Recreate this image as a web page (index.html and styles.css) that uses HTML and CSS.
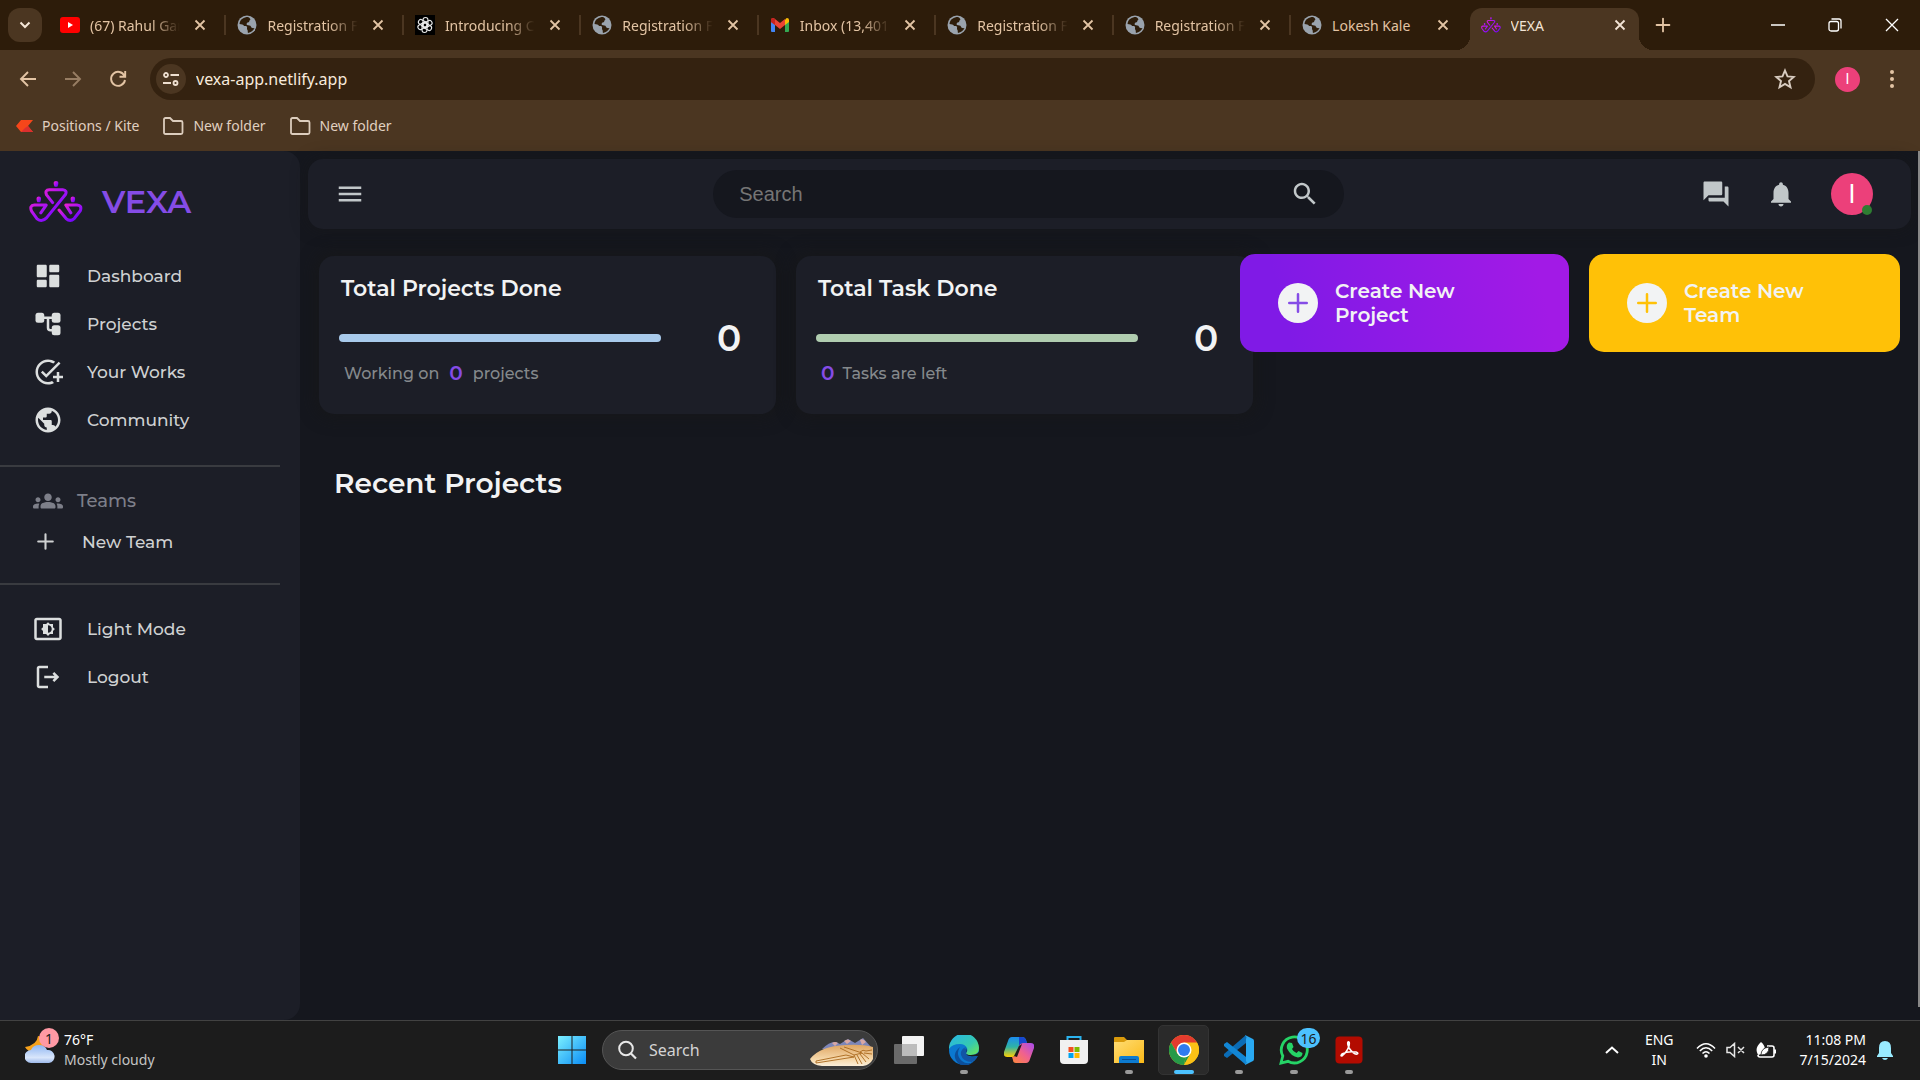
FILE: index.html
```html
<!DOCTYPE html>
<html lang="en">
<head>
<meta charset="utf-8">
<meta name="viewport" content="width=device-width, initial-scale=1">
<title>VEXA</title>
<link rel="stylesheet" href="styles.css">
</head>
<body>
<svg class="defs" aria-hidden="true">
  <defs>
    <linearGradient id="vexa" x1="0" y1="0" x2="1" y2="1"><stop offset="0" stop-color="#ff22c4"/><stop offset=".5" stop-color="#a512f5"/><stop offset="1" stop-color="#5a00ff"/></linearGradient>
    <linearGradient id="win" x1="0" y1="0" x2="1" y2="1"><stop offset="0" stop-color="#7cf0ff"/><stop offset="1" stop-color="#0a8cf5"/></linearGradient>
    <linearGradient id="cloud" x1="0" y1="0" x2="0" y2="1"><stop offset="0" stop-color="#8fb6f2"/><stop offset=".7" stop-color="#d9e6fb"/><stop offset="1" stop-color="#9db9ea"/></linearGradient>
    <linearGradient id="edgeTop" x1="0" y1="0" x2="1" y2="1"><stop offset="0" stop-color="#27b4ea"/><stop offset=".6" stop-color="#35c9b0"/><stop offset="1" stop-color="#72ea50"/></linearGradient>
    <linearGradient id="copilotA" x1="0" y1="0" x2="0" y2="1"><stop offset="0" stop-color="#1c8df0"/><stop offset=".5" stop-color="#2fb3a5"/><stop offset="1" stop-color="#ffd000"/></linearGradient>
    <linearGradient id="copilotB" x1="1" y1="0" x2="0" y2="1"><stop offset="0" stop-color="#a64bf0"/><stop offset=".5" stop-color="#f0618f"/><stop offset="1" stop-color="#ff8a3a"/></linearGradient>
    <linearGradient id="folder" x1="0" y1="0" x2="1" y2="1"><stop offset="0" stop-color="#ffdd75"/><stop offset="1" stop-color="#fbb917"/></linearGradient>
    <linearGradient id="sand" x1="0" y1="0" x2="0" y2="1"><stop offset="0" stop-color="#dfa562"/><stop offset=".7" stop-color="#f6d9ac"/><stop offset="1" stop-color="#fbeed9"/></linearGradient>
  </defs>
  <symbol id="i-logo" viewBox="88 92 160 124"><g fill="none" stroke="url(#vexa)" stroke-width="9" stroke-linecap="round" stroke-linejoin="round"><path d="M158 156 140 133Q134 118 148 118H188Q202 119 196 132L140 201Q126 215 112 204L96 182Q88 164 104 163H139L123 186"/><path d="M177 178 198 203Q210 214 222 203L240 180Q246 164 230 163H197L212 186"/></g><g fill="url(#vexa)"><path d="M168 92c9 0 8 9 4 17h-8c-4-8-5-17 4-17z"/><path d="M117 138c8 0 8 9 4 17h-8c-4-8-4-17 4-17z"/><path d="M218 138c8 0 8 9 4 17h-8c-4-8-4-17 4-17z"/></g></symbol>
  <symbol id="i-globe" viewBox="0 0 24 24"><path d="M12 2C6.480 2 2 6.480 2 12s4.480 10 10 10 10-4.480 10-10S17.520 2 12 2zm-1 17.930c-3.950-.49-7-3.850-7-7.930 0-.62.08-1.210.21-1.790L9 15v1c0 1.100.9 2 2 2v1.930zm6.900-2.540c-.26-.81-1-1.390-1.900-1.390h-1v-3c0-.55-.45-1-1-1H8v-2h2c.55 0 1-.45 1-1V7h2c1.100 0 2-.9 2-2v-.41c2.930 1.190 5 4.060 5 7.410 0 2.080-.8 3.970-2.100 5.390z"/></symbol>
  <symbol id="i-site" viewBox="0 0 20 20"><circle cx="10" cy="10" r="9.500" fill="#9aa3ad"/><path d="M11 2C7 2 3 4 2.500 9c2 .2 4 .4 4.500 2 1.500 0 2.500-.3 3 .8.300 1.300-.5 2 .5 3.200.5 1 0 2 .5 3 3-.5 5.500-2.500 6.500-5-1.500.300-3 .2-3.500-1.300-.5-1.500-2.500-1.200-4-1.700-1-1 0-2.500 1.500-2.700 1-.3.500-1.600 1.500-2.300C14 4.500 13 3 11 2z" fill="#2e1d0a"/></symbol>
  <symbol id="i-close" viewBox="0 0 12 12"><path d="M1.500 1.500l9 9m0-9l-9 9" fill="none" stroke="currentColor" stroke-width="1.800"/></symbol>
  <symbol id="i-plus" viewBox="0 0 24 24"><path d="M12 5v14M5 12h14" fill="none" stroke="currentColor" stroke-width="2" stroke-linecap="round"/></symbol>
  <symbol id="i-search" viewBox="0 0 24 24"><path d="M15.500 14h-.79l-.28-.27C15.410 12.590 16 11.110 16 9.500 16 5.910 13.090 3 9.500 3S3 5.910 3 9.500 5.910 16 9.500 16c1.610 0 3.090-.59 4.230-1.570l.27.28v.79l5 4.990L20.490 19l-4.990-5zm-6 0C7.010 14 5 11.990 5 9.500S7.010 5 9.500 5 14 7.010 14 9.500 11.990 14 9.500 14z"/></symbol>
  <symbol id="i-folder" viewBox="0 0 22 20"><path d="M2 3.500Q2 2 3.500 2H8l3 3h8q1.500 0 1.500 1.500V16.500Q20.500 18 19 18H3.500Q2 18 2 16.500z" fill="none" stroke="#dccdbd" stroke-width="1.800"/></symbol>
  <symbol id="i-bell" viewBox="0 0 24 24"><path d="M12 22c1.100 0 2-.9 2-2h-4c0 1.100.89 2 2 2zm6-6v-5c0-3.070-1.640-5.640-4.500-6.320V4c0-.83-.67-1.500-1.500-1.500s-1.500.67-1.500 1.500v.68C7.630 5.360 6 7.920 6 11v5l-2 2v1h16v-1l-2-2z"/></symbol>
</svg>

<header class="browser">
  <div class="tabstrip">
    <button class="tab-search" aria-label="Search tabs"><svg width="12" height="12" viewBox="0 0 12 12"><path d="M1.500 3.500 6 8l4.500-4.500" fill="none" stroke="currentColor" stroke-width="2"/></svg></button>
    <div class="tabs">
      <div class="tab"><svg class="favicon" viewBox="0 0 20 20"><rect y="2" width="20" height="16" rx="3" fill="#f00"/><path d="M8 7v6l5-3z" fill="#fff"/></svg><span class="tab-title">(67) Rahul Gandhi</span><button class="tab-close" aria-label="Close tab"><svg><use href="#i-close"/></svg></button></div>
      <div class="tab"><svg class="favicon"><use href="#i-site"/></svg><span class="tab-title">Registration Form</span><button class="tab-close" aria-label="Close tab"><svg><use href="#i-close"/></svg></button></div>
      <div class="tab"><svg class="favicon" viewBox="0 0 20 20"><path d="M0 0h20v20H0z" fill="#000"/><g fill="none" stroke="#e8e8e8" stroke-width="1.100"><rect id="petal" x="8" y="2.500" width="5" height="10" rx="2.500"/><use href="#petal" transform="rotate(60 10 10)"/><use href="#petal" transform="rotate(120 10 10)"/><use href="#petal" transform="rotate(180 10 10)"/><use href="#petal" transform="rotate(240 10 10)"/><use href="#petal" transform="rotate(300 10 10)"/></g></svg><span class="tab-title">Introducing ChatGPT</span><button class="tab-close" aria-label="Close tab"><svg><use href="#i-close"/></svg></button></div>
      <div class="tab"><svg class="favicon"><use href="#i-site"/></svg><span class="tab-title">Registration Form</span><button class="tab-close" aria-label="Close tab"><svg><use href="#i-close"/></svg></button></div>
      <div class="tab"><svg class="favicon" viewBox="0 0 20 20"><path d="M1 5v11q0 1 1 1h3V8z" fill="#4285f4"/><path d="M19 5v11q0 1-1 1h-3V8z" fill="#34a853"/><path d="M15 5v5l4-3V5q0-2-2-2-1 0-2 2z" fill="#fbbc04"/><path d="M1 5q0-2 2-2 1 0 2 1l5 4 5-4v6l-5 4-5-4-4-3z" fill="#ea4335"/><path d="M1 5q0-2 2-2l2 1v6L1 7z" fill="#c5221f"/></svg><span class="tab-title">Inbox (13,401) - mail</span><button class="tab-close" aria-label="Close tab"><svg><use href="#i-close"/></svg></button></div>
      <div class="tab"><svg class="favicon"><use href="#i-site"/></svg><span class="tab-title">Registration Form</span><button class="tab-close" aria-label="Close tab"><svg><use href="#i-close"/></svg></button></div>
      <div class="tab"><svg class="favicon"><use href="#i-site"/></svg><span class="tab-title">Registration Form</span><button class="tab-close" aria-label="Close tab"><svg><use href="#i-close"/></svg></button></div>
      <div class="tab before-active"><svg class="favicon"><use href="#i-site"/></svg><span class="tab-title">Lokesh Kale</span><button class="tab-close" aria-label="Close tab"><svg><use href="#i-close"/></svg></button></div>
      <div class="tab active"><svg class="favicon"><use href="#i-logo"/></svg><span class="tab-title">VEXA</span><button class="tab-close" aria-label="Close tab"><svg><use href="#i-close"/></svg></button></div>
    </div>
    <button class="new-tab" aria-label="New tab"><svg width="22" height="22"><use href="#i-plus"/></svg></button>
    <div class="window-controls">
      <button aria-label="Minimize"><svg width="14" height="14" viewBox="0 0 14 14"><path d="M0 7h14" stroke="#fff" stroke-width="1.500"/></svg></button>
      <button aria-label="Restore"><svg width="14" height="14" viewBox="0 0 14 14"><g fill="none" stroke="#fff" stroke-width="1.300"><rect x="1" y="3.500" width="9.500" height="9.500" rx="2"/><path d="M3.500 1H11q2 0 2 2v7.500"/></g></svg></button>
      <button aria-label="Close window"><svg width="14" height="14" viewBox="0 0 14 14"><path d="M1 1l12 12M13 1L1 13" stroke="#fff" stroke-width="1.300"/></svg></button>
    </div>
  </div>

  <div class="toolbar">
    <div class="nav-buttons">
      <button aria-label="Back"><svg width="18" height="18" viewBox="0 0 18 18"><path d="M17 9H2m7-7L2 9l7 7" fill="none" stroke="currentColor" stroke-width="1.900"/></svg></button>
      <button class="dim" aria-label="Forward"><svg width="18" height="18" viewBox="0 0 18 18"><path d="M1 9h15M9 2l7 7-7 7" fill="none" stroke="currentColor" stroke-width="1.900"/></svg></button>
      <button aria-label="Reload"><svg width="18" height="18" viewBox="0 0 18 18"><path d="M15.500 6A7 7 0 1 0 16 10M16.200 1v5.800H10.500" fill="none" stroke="currentColor" stroke-width="1.900"/></svg></button>
    </div>
    <div class="omnibox">
      <button class="site-info" aria-label="Site information"><svg width="16" height="14" viewBox="0 0 16 14"><g fill="none" stroke="#eedfd0" stroke-width="1.800"><circle cx="3" cy="3" r="2"/><path d="M7.500 3H16M0 11h8"/><circle cx="12.500" cy="11" r="2"/></g></svg></button>
      <input class="url" aria-label="Address" value="vexa-app.netlify.app">
      <button class="star" aria-label="Bookmark"><svg width="22" height="22" viewBox="0 0 22 22"><path d="M11 2.500l2.500 5.900 6.200.5-4.700 4.100 1.500 6.200L11 15.900l-5.500 3.300L7 13 2.300 8.900l6.200-.5z" fill="none" stroke="#d8ccc0" stroke-width="1.900"/></svg></button>
    </div>
    <button class="profile" aria-label="Profile">I</button>
    <button class="kebab" aria-label="Menu"><svg width="6" height="20" viewBox="0 0 6 20"><g fill="currentColor"><circle cx="3" cy="3" r="2"/><circle cx="3" cy="10" r="2"/><circle cx="3" cy="17" r="2"/></g></svg></button>
  </div>

  <nav class="bookmarks" aria-label="Bookmarks">
    <a href="#kite"><svg width="17" height="14" viewBox="0 0 17 14"><path d="M5 1h12l-5 6 5 6H5L0 7z" fill="#f6461a"/><path d="M12 7l5 6H5l4-4z" fill="#db2f2f"/></svg>Positions / Kite</a>
    <a href="#folder1"><svg width="22" height="20"><use href="#i-folder"/></svg>New folder</a>
    <a href="#folder2"><svg width="22" height="20"><use href="#i-folder"/></svg>New folder</a>
  </nav>
</header>

<div class="app">
  <aside class="sidebar">
    <a class="brand" href="#home"><svg width="54" height="42"><use href="#i-logo"/></svg>VEXA</a>
    <nav class="menu" aria-label="Main">
      <a href="#dashboard"><svg viewBox="0 0 24 24"><path d="M4 13h6c.55 0 1-.45 1-1V4c0-.55-.45-1-1-1H4c-.55 0-1 .45-1 1v8c0 .55.45 1 1 1zm0 8h6c.55 0 1-.45 1-1v-4c0-.55-.45-1-1-1H4c-.55 0-1 .45-1 1v4c0 .55.45 1 1 1zm10 0h6c.55 0 1-.45 1-1v-8c0-.55-.45-1-1-1h-6c-.55 0-1 .45-1 1v8c0 .55.45 1 1 1zM13 4v4c0 .55.45 1 1 1h6c.55 0 1-.45 1-1V4c0-.55-.45-1-1-1h-6c-.55 0-1 .45-1 1z"/></svg>Dashboard</a>
      <a href="#projects"><svg viewBox="0 0 24 24"><rect x="2" y="3" width="7" height="8" rx="2"/><rect x="15" y="3" width="7" height="8" rx="2"/><rect x="15" y="13" width="7" height="8" rx="2"/><path d="M8 7h8M12 7v8q0 2 2 2h2" fill="none" stroke="currentColor" stroke-width="2"/></svg>Projects</a>
      <a href="#works"><svg viewBox="0 0 24 24"><path d="M22 5.180 10.590 16.600l-4.240-4.240 1.410-1.410 2.830 2.830 10-10L22 5.180zM12 20c-4.410 0-8-3.590-8-8s3.590-8 8-8c1.570 0 3.040.46 4.280 1.250l1.450-1.450C16.100 2.670 14.130 2 12 2 6.480 2 2 6.480 2 12s4.480 10 10 10c1.730 0 3.360-.44 4.780-1.220l-1.500-1.500c-1 .46-2.110.72-3.280.72zm7-5h-3v2h3v3h2v-3h3v-2h-3v-3h-2v3z"/></svg>Your Works</a>
      <a href="#community"><svg><use href="#i-globe"/></svg>Community</a>
    </nav>
    <hr>
    <section class="teams">
      <h2><svg viewBox="0 0 24 24"><path d="M12 12.750c1.630 0 3.070.39 4.240.9 1.080.48 1.760 1.560 1.760 2.730V17c0 .55-.45 1-1 1H7c-.55 0-1-.45-1-1v-.61c0-1.180.68-2.260 1.760-2.730 1.170-.52 2.610-.91 4.240-.91zM4 13c1.100 0 2-.9 2-2s-.9-2-2-2-2 .9-2 2 .9 2 2 2zm1.130 1.100c-.37-.06-.74-.1-1.130-.1-.99 0-1.930.21-2.780.58C.48 14.900 0 15.620 0 16.430V17c0 .55.45 1 1 1h3.500v-1.610c0-.83.23-1.610.63-2.290zM20 13c1.100 0 2-.9 2-2s-.9-2-2-2-2 .9-2 2 .9 2 2 2zm4 3.430c0-.81-.48-1.530-1.220-1.850-.85-.37-1.790-.58-2.780-.58-.39 0-.76.04-1.130.1.400.68.63 1.460.63 2.290V18H23c.55 0 1-.45 1-1v-.57zM12 6c1.660 0 3 1.340 3 3s-1.340 3-3 3-3-1.340-3-3 1.340-3 3-3z"/></svg>Teams</h2>
      <a href="#new-team"><svg><use href="#i-plus"/></svg>New Team</a>
    </section>
    <hr>
    <nav class="menu foot" aria-label="Account">
      <a href="#theme"><svg viewBox="0 0 24 24"><path d="M21 3H3c-1.100 0-2 .9-2 2v14c0 1.100.9 2 2 2h18c1.100 0 2-.9 2-2V5c0-1.100-.9-2-2-2zm0 16.010H3V4.990h18v14.020zM8 16h2.500l1.500 1.500 1.500-1.500H16v-2.500l1.500-1.500-1.500-1.500V8h-2.500L12 6.500 10.500 8H8v2.500L6.500 12 8 13.500V16zm4-7c1.660 0 3 1.340 3 3s-1.340 3-3 3V9z"/></svg>Light Mode</a>
      <a href="#logout"><svg viewBox="0 0 24 24"><path d="M5 5h7V3H5c-1.100 0-2 .9-2 2v14c0 1.100.9 2 2 2h7v-2H5V5zm16 7-4-4-1.410 1.410L17.170 11H9v2h8.170l-1.580 1.580L17 16l4-4z"/></svg>Logout</a>
    </nav>
  </aside>

  <main class="page">
    <div class="navbar">
      <button class="icon-btn" aria-label="Toggle menu"><svg viewBox="0 0 24 24"><path d="M3 18h18v-2H3v2zm0-5h18v-2H3v2zm0-7v2h18V6H3z"/></svg></button>
      <div class="search">
        <input type="text" placeholder="Search" aria-label="Search">
        <button class="icon-btn" aria-label="Search"><svg><use href="#i-search"/></svg></button>
      </div>
      <div class="nav-actions">
        <button class="icon-btn" aria-label="Chat"><svg viewBox="0 0 24 24"><path d="M21 6h-2v9H6v2c0 .55.45 1 1 1h11l4 4V7c0-.55-.45-1-1-1zm-4 6V3c0-.55-.45-1-1-1H3c-.55 0-1 .45-1 1v14l4-4h10c.55 0 1-.45 1-1z"/></svg></button>
        <button class="icon-btn" aria-label="Notifications"><svg><use href="#i-bell"/></svg></button>
        <button class="avatar" aria-label="Account">I<span class="online"></span></button>
      </div>
    </div>

    <div class="overview">
      <div class="stats">
        <section class="stat">
          <h2>Total Projects Done</h2>
          <div class="stat-row"><div class="bar blue"></div><strong>0</strong></div>
          <p>Working on <b>0</b> projects</p>
        </section>
        <section class="stat">
          <h2>Total Task Done</h2>
          <div class="stat-row"><div class="bar green"></div><strong>0</strong></div>
          <p class="tight"><b>0</b> Tasks are left</p>
        </section>
      </div>
      <div class="actions">
        <button class="create project"><span class="plus"><svg><use href="#i-plus"/></svg></span><span class="label">Create New Project</span></button>
        <button class="create team"><span class="plus"><svg><use href="#i-plus"/></svg></span><span class="label">Create New Team</span></button>
      </div>
    </div>
    <h1>Recent Projects</h1>
    <div class="scroll-thumb"></div>
  </main>
</div>

<footer class="taskbar">
  <button class="weather">
    <span class="weather-icon"><svg width="30" height="30" viewBox="0 0 30 30"><path d="M13 1q-1 9-13 11 3 6 12 5l6-4V2z" fill="#f5a11c"/><path d="M6 28a6 6 0 0 1 0-13q2-5 8-5t8 5a6.500 6.500 0 0 1 2 13z" fill="url(#cloud)"/></svg><span class="badge pink">1</span></span>
    <span class="two-line"><span>76°F</span><span class="muted">Mostly cloudy</span></span>
  </button>

  <div class="apps">
    <button class="app-btn" aria-label="Start"><svg viewBox="0 0 30 30"><g fill="url(#win)"><path d="M1 1h13.500v13.500H1zM15.500 1H29v13.500H15.500zM1 15.500h13.500V29H1zM15.500 15.500H29V29H15.500z" /></g></svg></button>
    <div class="task-search">
      <svg width="20" height="20" viewBox="0 0 20 20"><circle cx="9" cy="8.500" r="6.800" fill="none" stroke="#e8e8e8" stroke-width="2"/><path d="M14 13.500l5 5" stroke="#e8e8e8" stroke-width="2.200"/></svg>
      <input type="text" placeholder="Search" aria-label="Search Windows">
      <svg class="dunes" width="64" height="30" viewBox="0 0 64 30"><path d="M12 12Q20 4 26 5l4 2 8-5 7 4 8-5 8 9v4z" fill="#7d86b8"/><path d="M22 6q3-2 6 0l-3 3zM34 4q4-3 7 0l-4 3zM50 3q3-2 6 2l-4 3z" fill="#d8a7a4"/><path d="M0 22Q10 9 36 8q16-1 27 2v12q-3 6-10 7H12Q2 28 0 22z" fill="url(#sand)"/><g fill="none" stroke="#a9681c" stroke-width=".9"><path d="M6 24l30-6 8 2-38 6zM30 11l14 7 8-2-18-6M44 18l4 9M47 18l5 9M50 17l6 8M52 16l7 6M50 15q3-3 6-1l6-1M54 16l8 1"/></g></svg>
    </div>
    <button class="app-btn" aria-label="Task view"><svg viewBox="0 0 30 30"><rect x="8" y="1" width="22" height="20" rx="1" fill="#f3f3f3"/><rect y="9" width="23" height="20" rx="1" fill="#6a6a6a"/><path d="M8 9h15v12H8z" fill="#bcbcbc"/></svg></button>
    <button class="app-btn running" aria-label="Edge"><svg viewBox="0 0 30 30"><circle cx="15" cy="15" r="15" fill="#0b78d0"/><path d="M0 14A15 15 0 0 1 30 13q0 7-8 7-5 0-5-2 2-2 1-5-2-4-7-4Q3 9 0 14z" fill="url(#edgeTop)"/><path d="M11 12q-5 8 2 14 5 4 11 1-6 6-14 2Q1 20 11 12z" fill="#0c4f9b"/><path d="M17 18q1 4 7 4 3 0 5-1.500Q27 25 23 27q-9 0-11-7-1-4 3-7 4 1 2 5z" fill="#1255a5"/><path d="M15 12q4 1 2 6 0 3 6 3.500l6-.5-1 4 3-3V15q-2 5-9 5-5 0-5-2 3-4-2-6z" fill="#1c1c1c"/></svg></button>
    <button class="app-btn" aria-label="Copilot"><svg viewBox="0 0 30 30"><path d="M8 2h10q3 0 4 3l1 3h-4q-3 0-4 3l-3 8q-1 3-4 3H3q-4 0-3-5L4 6q1-4 4-4z" fill="url(#copilotA)"/><path d="M22 28H12q-3 0-3-3l-1-3q3 0 4-3l3-8q1-3 4-3h8q4 0 3 5l-4 11q-1 4-4 4z" fill="url(#copilotB)"/><path d="M15 2h3q3 0 4 3l1 3h-4q-3 0-4 3z" fill="#1747d0"/><path d="M15 11l3-2-5 13-3-1z" fill="#1c1c1c"/></svg></button>
    <button class="app-btn" aria-label="Store"><svg viewBox="0 0 30 30"><path d="M8.500 7V2h13v5" fill="none" stroke="#2bb3ee" stroke-width="2"/><path d="M1 5h28v20q0 4-4 4H5q-4 0-4-4z" fill="#f1f1f1"/><path d="M9.500 12h5v5h-5z" fill="#f25022"/><path d="M15.500 12h5v5h-5z" fill="#7fba00"/><path d="M9.500 18h5v5h-5z" fill="#00a4ef"/><path d="M15.500 18h5v5h-5z" fill="#ffb900"/></svg></button>
    <button class="app-btn running" aria-label="File Explorer"><svg viewBox="0 0 30 30"><path d="M0 8V3q0-1 1-1h9l3 3h16v6H0z" fill="#d99a0b"/><path d="M0 7h10l3-2h17v23H0z" fill="url(#folder)"/><path d="M5 28v-5q0-2 2-2h16q2 0 2 2v5z" fill="#0d7bd0"/><path d="M8 24.500h14" stroke="#0a4f94"/></svg></button>
    <button class="app-btn running current" aria-label="Chrome"><svg viewBox="0 0 30 30"><circle cx="15" cy="15" r="15" fill="#fbc116"/><path d="M2 7.500A15 15 0 0 1 28 7.500H15L8.500 18.800z" fill="#e33b2e"/><path d="M2 7.500 8.500 18.800q3 4 8 3.500L15 30A15 15 0 0 1 2 7.500z" fill="#269a48"/><path d="M15 30l6.500-11.200L8.500 18.800q3 4 8 3.500z" fill="#269a48"/><path d="M15 30l6.500-11.200 4-7.800 2.500-3.500A15 15 0 0 1 15 30z" fill="#fbc116"/><circle cx="15" cy="15" r="7.500" fill="#fff"/><circle cx="15" cy="15" r="6" fill="#2f7bf0"/></svg></button>
    <button class="app-btn running" aria-label="VS Code"><svg viewBox="0 0 30 30"><path d="M22 0v8L3 23l-3-2v-2z" fill="#0b6cb5"/><path d="M22 30v-8L3 7 0 9v2z" fill="#1286d4"/><path d="M21 0l8 4q1 .5 1 2v18q0 1.500-1 2l-8 4q2-2 1-4V4q1-2-1-4z" fill="#29a9f2"/></svg></button>
    <button class="app-btn running" aria-label="WhatsApp"><svg viewBox="0 0 30 30"><path d="M2 28l1.800-7A13 13 0 1 1 9 26.300z" fill="none" stroke="#25d366" stroke-width="2.800"/><path d="M10 7.500l3 .5 1.500 4-1.500 2q1 2.500 4.500 4l2-2 4 2q0 4-4.500 4.500Q12 21.500 8 13.500q-1-4 2-6z" fill="#25d366"/></svg><span class="badge blue">16</span></button>
    <button class="app-btn running" aria-label="Acrobat"><svg viewBox="0 0 30 30"><rect x="1.500" y="1.500" width="27" height="27" rx="4" fill="#b30b00"/><path d="M8 21q-2 0 0-2 5-3 14-2 3 1 1 2-3 1-8-6-2-5-1-6 2-1 1 4-2 6-7 10z" fill="none" stroke="#fff" stroke-width="1.600"/></svg></button>
  </div>

  <div class="tray">
    <button aria-label="Hidden icons"><svg width="14" height="8" viewBox="0 0 14 8"><path d="M1 7l6-5.500L13 7" fill="none" stroke="#fff" stroke-width="2"/></svg></button>
    <button class="two-line center"><span>ENG</span><span>IN</span></button>
    <button class="status" aria-label="Network, volume, battery">
      <svg width="20" height="16" viewBox="0 0 20 16"><g fill="none" stroke="#fff" stroke-width="1.500"><path d="M1 6.500q9-9.500 18 0M3.800 9q6.200-6.500 12.400 0M6.500 11.500q3.500-3.700 7 0"/></g><circle cx="10" cy="14" r="1.800" fill="#fff"/></svg>
      <svg width="20" height="16" viewBox="0 0 20 16"><path d="M1 5.500h3L8.500 1.500v13L4 10.500H1zM12 5l6 6m0-6l-6 6" fill="none" stroke="#e6e6e6" stroke-width="1.500"/></svg>
      <svg width="20" height="17" viewBox="0 0 20 17"><path d="M11 4h5q2 0 2 2v7q0 2-2 2H4q-2 0-2-2" fill="none" stroke="#fff" stroke-width="1.600"/><path d="M18 7.500h2v4h-2zM5 0q7 6 1 12l-4 1q-4-7 3-13z" fill="#fff"/><path d="M5 13q0-7 8-8 0 8-8 8z" fill="#fff" stroke="#1c1c1c" stroke-width=".8"/></svg>
    </button>
    <button class="two-line end"><span>11:08 PM</span><span>7/15/2024</span></button>
    <button aria-label="Notifications"><svg class="bell" viewBox="0 0 16 19"><path d="M8 0Q2 0 2 7v5L0 15v1h16v-1l-2-3V7q0-7-6-7zM5 17h6q-1 2-3 2t-3-2z" fill="#99ebff"/></svg></button>
  </div>
</footer>
</body>
</html>
```
FILE: styles.css
```css
:root {
  --bg: #15171e;
  --surface: #1c1e27;
  --primary: #854ce6;
  --text: #f2f3f4;
  --item: #cfd1d2;
  --app-font: Montserrat, Inter, sans-serif;
  --ui-font: "Noto Sans", "Open Sans", sans-serif;
}

* { box-sizing: border-box; }

body {
  margin: 0;
  min-height: 100vh;
  display: flex;
  flex-direction: column;
  overflow-x: hidden;
  background: var(--bg);
  color: var(--text);
  font-family: var(--app-font);
}

button {
  display: flex;
  align-items: center;
  justify-content: center;
  padding: 0;
  border: 0;
  background: none;
  color: inherit;
  font: inherit;
}

input {
  min-width: 0;
  padding: 0;
  border: 0;
  outline: 0;
  background: none;
  color: inherit;
  font: inherit;
}

a { color: inherit; text-decoration: none; }
h1, h2, p { margin: 0; }
svg { flex: none; display: block; fill: currentColor; }
.defs { position: absolute; width: 0; height: 0; }

/* Browser window */
.browser {
  background: #4b3621;
  color: #e3c4a4;
  font-family: var(--ui-font);
  font-size: 14px;
}

.tabstrip {
  display: flex;
  align-items: center;
  height: 50px;
  background: #2d1c0a;
}

.tab-search {
  width: 34px;
  height: 34px;
  margin-left: 8px;
  border-radius: 12px;
  background: #4b3621;
  color: #f5e6d6;
}

.tabs {
  flex: 0 1 1597px;
  min-width: 0;
  margin-left: 7px;
  align-self: stretch;
  display: grid;
  grid-template-columns: repeat(9, 1fr);
}

.tab {
  position: relative;
  min-width: 0;
  display: flex;
  align-items: center;
  gap: 10px;
  padding: 0 20px 0 11px;
}

.tab::after {
  content: "";
  position: absolute;
  right: 0;
  top: 15px;
  width: 2px;
  height: 20px;
  background: #4b3621;
}

.tab.before-active::after { display: none; }

.tab.active {
  margin: 8px 7px 0 1px;
  padding: 0 13px 8px 11px;
  border-radius: 12px 12px 0 0;
  background: #4b3621;
  color: #f3e4d6;
}

.tab.active::before,
.tab.active::after {
  content: "";
  position: absolute;
  top: auto;
  bottom: 0;
  width: 14px;
  height: 14px;
}

.tab.active::before {
  left: -14px;
  background: radial-gradient(circle at 0 0, #2d1c0a 14px, #4b3621 14px);
}

.tab.active::after {
  right: -14px;
  background: radial-gradient(circle at 100% 0, #2d1c0a 14px, #4b3621 14px);
}

.favicon { width: 20px; height: 20px; }

.tab-title {
  flex: 1;
  min-width: 0;
  overflow: hidden;
  white-space: nowrap;
  -webkit-mask-image: linear-gradient(90deg, #000 68%, transparent);
  mask-image: linear-gradient(90deg, #000 68%, transparent);
}

.active .tab-title,
.before-active .tab-title { -webkit-mask-image: none; mask-image: none; }

.tab-close svg { width: 12px; height: 12px; }
.tab-close { width: 12px; margin-left: 4px; }
.new-tab { width: 34px; height: 34px; }
.window-controls { display: flex; margin-left: auto; }
.window-controls button { width: 57px; height: 50px; }

.toolbar {
  display: flex;
  align-items: center;
  padding: 8px 16px 0 5px;
}

.nav-buttons { display: flex; width: 145px; }
.nav-buttons button { width: 45px; height: 34px; }
.dim { opacity: .5; }

.omnibox {
  flex: 1;
  display: flex;
  align-items: center;
  height: 42px;
  padding: 0 19px 0 6px;
  border-radius: 21px;
  background: #342210;
}

.site-info {
  width: 30px;
  height: 30px;
  border-radius: 50%;
  background: #4b3621;
}

.url {
  flex: 1;
  margin-left: 10px;
  color: #f7eadc;
  font-size: 16px;
}

.profile {
  width: 25px;
  height: 25px;
  margin: 0 20px;
  border-radius: 50%;
  background: #ec407a;
  color: #fff;
  font-family: Roboto, sans-serif;
}

.kebab { width: 24px; height: 30px; }

.bookmarks {
  display: flex;
  align-items: center;
  gap: 23px;
  height: 51px;
  padding: 0 16px;
  color: #e0d0c0;
}

.bookmarks a { display: flex; align-items: center; gap: 9px; }

/* Application */
.app { flex: 1; display: flex; }

.sidebar {
  flex: none;
  width: 300px;
  border-radius: 0 16px 16px 0;
  background: var(--surface);
  color: var(--item);
}

.brand {
  display: flex;
  align-items: center;
  gap: 19px;
  padding: 30px 29px 29px;
  color: var(--primary);
  font-size: 32px;
  font-weight: 600;
  line-height: 42px;
}

.menu a {
  display: flex;
  align-items: center;
  gap: 24px;
  height: 48px;
  padding-left: 33px;
  font-size: 17px;
  font-weight: 500;
}

.menu svg { width: 30px; height: 30px; fill: #dcdfdf; color: #dcdfdf; }

.sidebar hr {
  width: 280px;
  height: 2px;
  margin: 21px 0 13px;
  border: 0;
  background: #393b40;
}

.teams h2,
.teams a {
  display: flex;
  align-items: center;
  height: 41px;
  padding-left: 33px;
  font-weight: 500;
}

.teams h2 { gap: 14px; color: #7d7f89; font-size: 18px; }
.teams h2 svg { width: 30px; height: 30px; }
.teams a { gap: 24px; font-size: 17px; }
.teams a svg { width: 25px; height: 25px; }
.sidebar .foot { margin-top: 20px; }

.page {
  position: relative;
  flex: 1;
  min-width: 0;
  padding: 8px 9px 8px 8px;
}

.navbar {
  display: flex;
  align-items: center;
  justify-content: space-between;
  height: 70px;
  padding: 0 38px 0 27px;
  border-radius: 15px;
  background: var(--surface);
  box-shadow: 0 0 16px rgba(23, 23, 23, .5);
  color: #c1c7c9;
}

.icon-btn svg { width: 30px; height: 30px; }

.search {
  width: 41%;
  height: 48px;
  margin-right: 9px;
  display: flex;
  align-items: center;
  padding: 0 24px 0 26px;
  border-radius: 24px;
  background: var(--bg);
}

.search input {
  flex: 1;
  font-family: "Liberation Sans", Arial, sans-serif;
  font-size: 20px;
}

.search input::placeholder { color: #757575; opacity: 1; }

.nav-actions { display: flex; align-items: center; gap: 35px; }

.avatar {
  position: relative;
  width: 42px;
  height: 42px;
  border-radius: 50%;
  background: #ec407a;
  color: #fff;
  font-family: Roboto, sans-serif;
  font-size: 25px;
}

.online {
  position: absolute;
  right: 1px;
  bottom: 0;
  width: 10px;
  height: 10px;
  border-radius: 50%;
  background: #2e7d32;
}

.overview {
  display: grid;
  grid-template-columns: 921fr 660fr;
  align-items: start;
  padding: 25px 11px 0;
}

/* The stat cards run slightly under the action buttons */
.stats {
  display: grid;
  grid-template-columns: 1fr 1fr;
  gap: 20px;
  margin: 2px -13px 0 0;
}

.stat {
  height: 158px;
  padding: 19px 20px;
  border-radius: 15px;
  background: var(--surface);
  box-shadow: 0 0 16px 4px rgba(23, 23, 23, .6);
}

.stat h2 { padding-left: 2px; font-size: 22px; font-weight: 600; line-height: 28px; }
.stat-row { display: flex; align-items: center; height: 70px; }
.bar { flex: 1; height: 8px; border-radius: 4px; }
.bar.blue { background: #a8caeb; }
.bar.green { background: #b0cdb0; }
.stat strong { width: 95px; padding-left: 41px; text-align: center; font-size: 36px; font-weight: 600; line-height: 44px; }

.stat p {
  display: flex;
  align-items: center;
  gap: 10px;
  height: 24px;
  margin-top: -12px;
  padding-left: 5px;
  color: #85898c;
  font-size: 16px;
  font-weight: 500;
}

.stat p.tight { gap: 8px; }
.stat p b { color: var(--primary); font-size: 20px; font-weight: 600; }

.actions {
  position: relative;
  display: grid;
  grid-template-columns: 329fr 311fr;
  gap: 20px;
}

.create {
  height: 98px;
  justify-content: flex-start;
  gap: 17px;
  padding: 0 38px;
  border-radius: 15px;
  color: var(--text);
  font-size: 20px;
  font-weight: 600;
  line-height: 24px;
  text-align: left;
}

.create .label { max-width: 130px; }
.create.project { background: linear-gradient(76deg, #801ae6 15%, #a21ae6 90%); }
.create.team { background: #ffc107; }

.plus {
  flex: none;
  width: 40px;
  height: 40px;
  display: flex;
  align-items: center;
  justify-content: center;
  border-radius: 50%;
  background: var(--text);
  color: var(--primary);
}

.team .plus { color: #ffc107; }
.plus svg { width: 30px; height: 30px; }

.page h1 {
  margin: 52px 0 0 26px;
  font-size: 28px;
  font-weight: 600;
  line-height: 34px;
}

.scroll-thumb {
  position: absolute;
  top: 0;
  right: 0;
  bottom: 13px;
  width: 2px;
  background: #888;
}

/* Windows taskbar */
.taskbar {
  display: grid;
  grid-template-columns: 1fr auto 1fr;
  align-items: center;
  height: 60px;
  padding-bottom: 1px;
  border-top: 1px solid #424242;
  background: #1c1c1c;
  color: #fff;
  font-family: var(--ui-font);
  font-size: 14px;
}

.weather { justify-self: start; gap: 9px; margin-left: 25px; }
.weather-icon { position: relative; }
.two-line { display: flex; flex-direction: column; align-items: flex-start; line-height: 20px; }
.two-line.center { align-items: center; }
.two-line.end { align-items: flex-end; }
.muted { color: #c4c4c4; }

.badge {
  position: absolute;
  display: grid;
  place-items: center;
  border-radius: 50%;
  color: #1c1c1c;
}

.badge.pink { top: -7px; right: -4px; width: 20px; height: 20px; background: #ff99a4; }
.badge.blue { top: 3px; right: 1px; width: 23px; height: 20px; border-radius: 10px; background: #4cc2ff; }

.apps { display: flex; align-items: center; }
.app-btn { position: relative; width: 55px; height: 50px; border-radius: 5px; }
.app-btn svg { width: 30px; height: 30px; }

.running::after {
  content: "";
  position: absolute;
  bottom: 1px;
  width: 8px;
  height: 4px;
  border-radius: 2px;
  background: #9a9a9a;
}

.current {
  width: 51px;
  margin: 0 2px;
  border: 1px solid #333;
  background: #2a2a2a;
}

.current::after { bottom: 0; width: 20px; background: #4cc2ff; }

.task-search {
  display: flex;
  align-items: center;
  width: 276px;
  height: 40px;
  margin: 0 3px;
  padding: 0 3px 0 14px;
  border: 1px solid #555;
  border-radius: 20px;
  background: #3b3b3b;
  font-size: 16px;
}

.task-search input { flex: 1; margin-left: 12px; }
.task-search input::placeholder { color: #d4d4d4; opacity: 1; }
.dunes { align-self: flex-end; margin-bottom: 2px; }

.tray { display: flex; align-items: center; justify-self: end; margin-right: 27px; }
.tray .center { margin-left: 26px; }
.status { gap: 10px; margin: 0 24px 0 22px; }
.tray .end { margin-right: 11px; }
.bell { width: 16px; height: 19px; }
```
